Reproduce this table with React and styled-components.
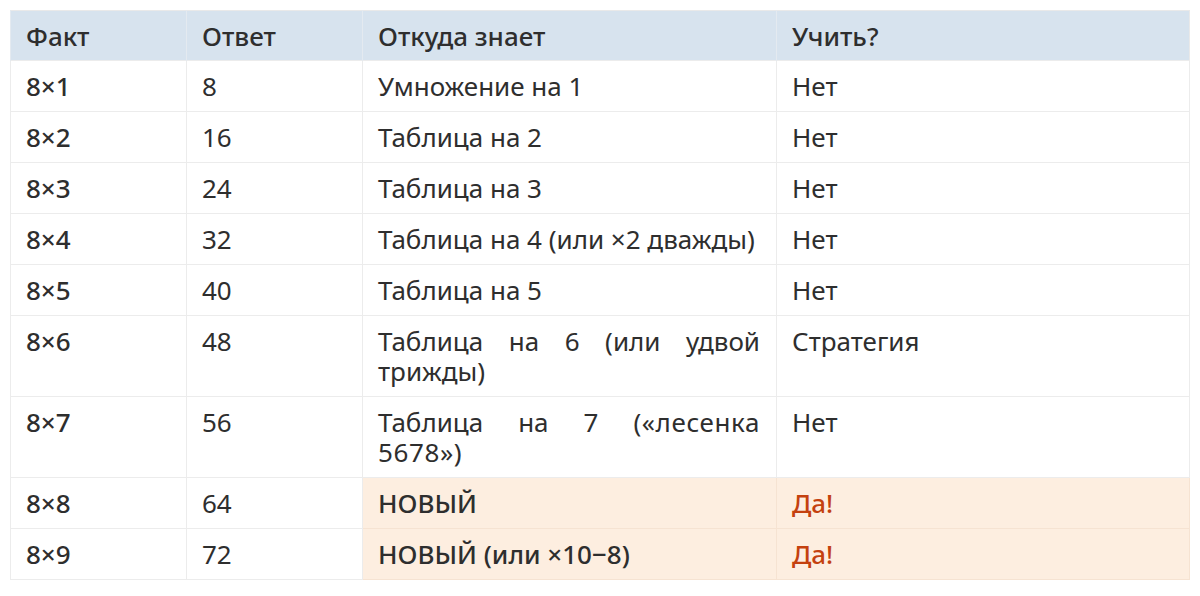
import React from "react";
import styled, { createGlobalStyle } from "styled-components";

const Global = createGlobalStyle`
  html, body { margin: 0; padding: 0; background: #ffffff; }
  body { font-family: "Noto Sans", "DejaVu Sans", sans-serif; color: #2e2e2e; }
`;

const Page = styled.div`
  padding: 10px 11px 10px 10px;
`;

const Table = styled.table`
  width: 100%;
  border-collapse: collapse;
  table-layout: fixed;
  font-size: 26px;
  line-height: 30px;
  border: 1px solid #e9e9e9;
`;

const Col = styled.col`
  width: ${(p) => p.$w}px;
`;

const Th = styled.th`
  background: #d7e3ee;
  text-align: left;
  font-weight: 500;
  padding: 10px 16px 9px 15px;
  border-left: 1px solid #e4eaf0;
  color: #2e2e2e;
`;

const Td = styled.td`
  vertical-align: top;
  padding: 10px 16px 10px 15px;
  border: 1px solid ${(p) => (p.$hl ? "#f6e3d2" : "#ececec")};
  background: ${(p) => (p.$hl ? "#fdeee0" : "#ffffff")};
  font-weight: ${(p) => p.$weight || 400};
  color: ${(p) => (p.$alert ? "#c4410f" : "#2e2e2e")};
  text-align: ${(p) => (p.$justify ? "justify" : "left")};
`;

const Quote = styled.span`
  letter-spacing: 0.6px;
`;

const rows = [
  ["8×1", "8", "Умножение на 1", "Нет"],
  ["8×2", "16", "Таблица на 2", "Нет"],
  ["8×3", "24", "Таблица на 3", "Нет"],
  ["8×4", "32", "Таблица на 4 (или ×2 дважды)", "Нет"],
  ["8×5", "40", "Таблица на 5", "Нет"],
  ["8×6", "48", "Таблица на 6 (или удвой трижды)", "Стратегия"],
  ["8×7", "56", <>Таблица на 7 <Quote>(«лесенка 5678»)</Quote></>, "Нет"],
  ["8×8", "64", "НОВЫЙ", "Да!", true],
  ["8×9", "72", "НОВЫЙ (или ×10−8)", "Да!", true],
];

export default function App() {
  return (
    <Page>
      <Global />
      <Table>
        <colgroup>
          <Col $w={176} />
          <Col $w={176} />
          <Col $w={414} />
          <Col $w={413} />
        </colgroup>
        <thead>
          <tr>
            <Th>Факт</Th>
            <Th>Ответ</Th>
            <Th>Откуда знает</Th>
            <Th>Учить?</Th>
          </tr>
        </thead>
        <tbody>
          {rows.map(([f, a, s, l, hl]) => (
            <tr key={f}>
              <Td $weight={500}>{f}</Td>
              <Td>{a}</Td>
              <Td $justify $hl={hl} $weight={hl ? 500 : 400}>{s}</Td>
              <Td $hl={hl} $alert={hl} $weight={hl ? 500 : 400}>{l}</Td>
            </tr>
          ))}
        </tbody>
      </Table>
    </Page>
  );
}
